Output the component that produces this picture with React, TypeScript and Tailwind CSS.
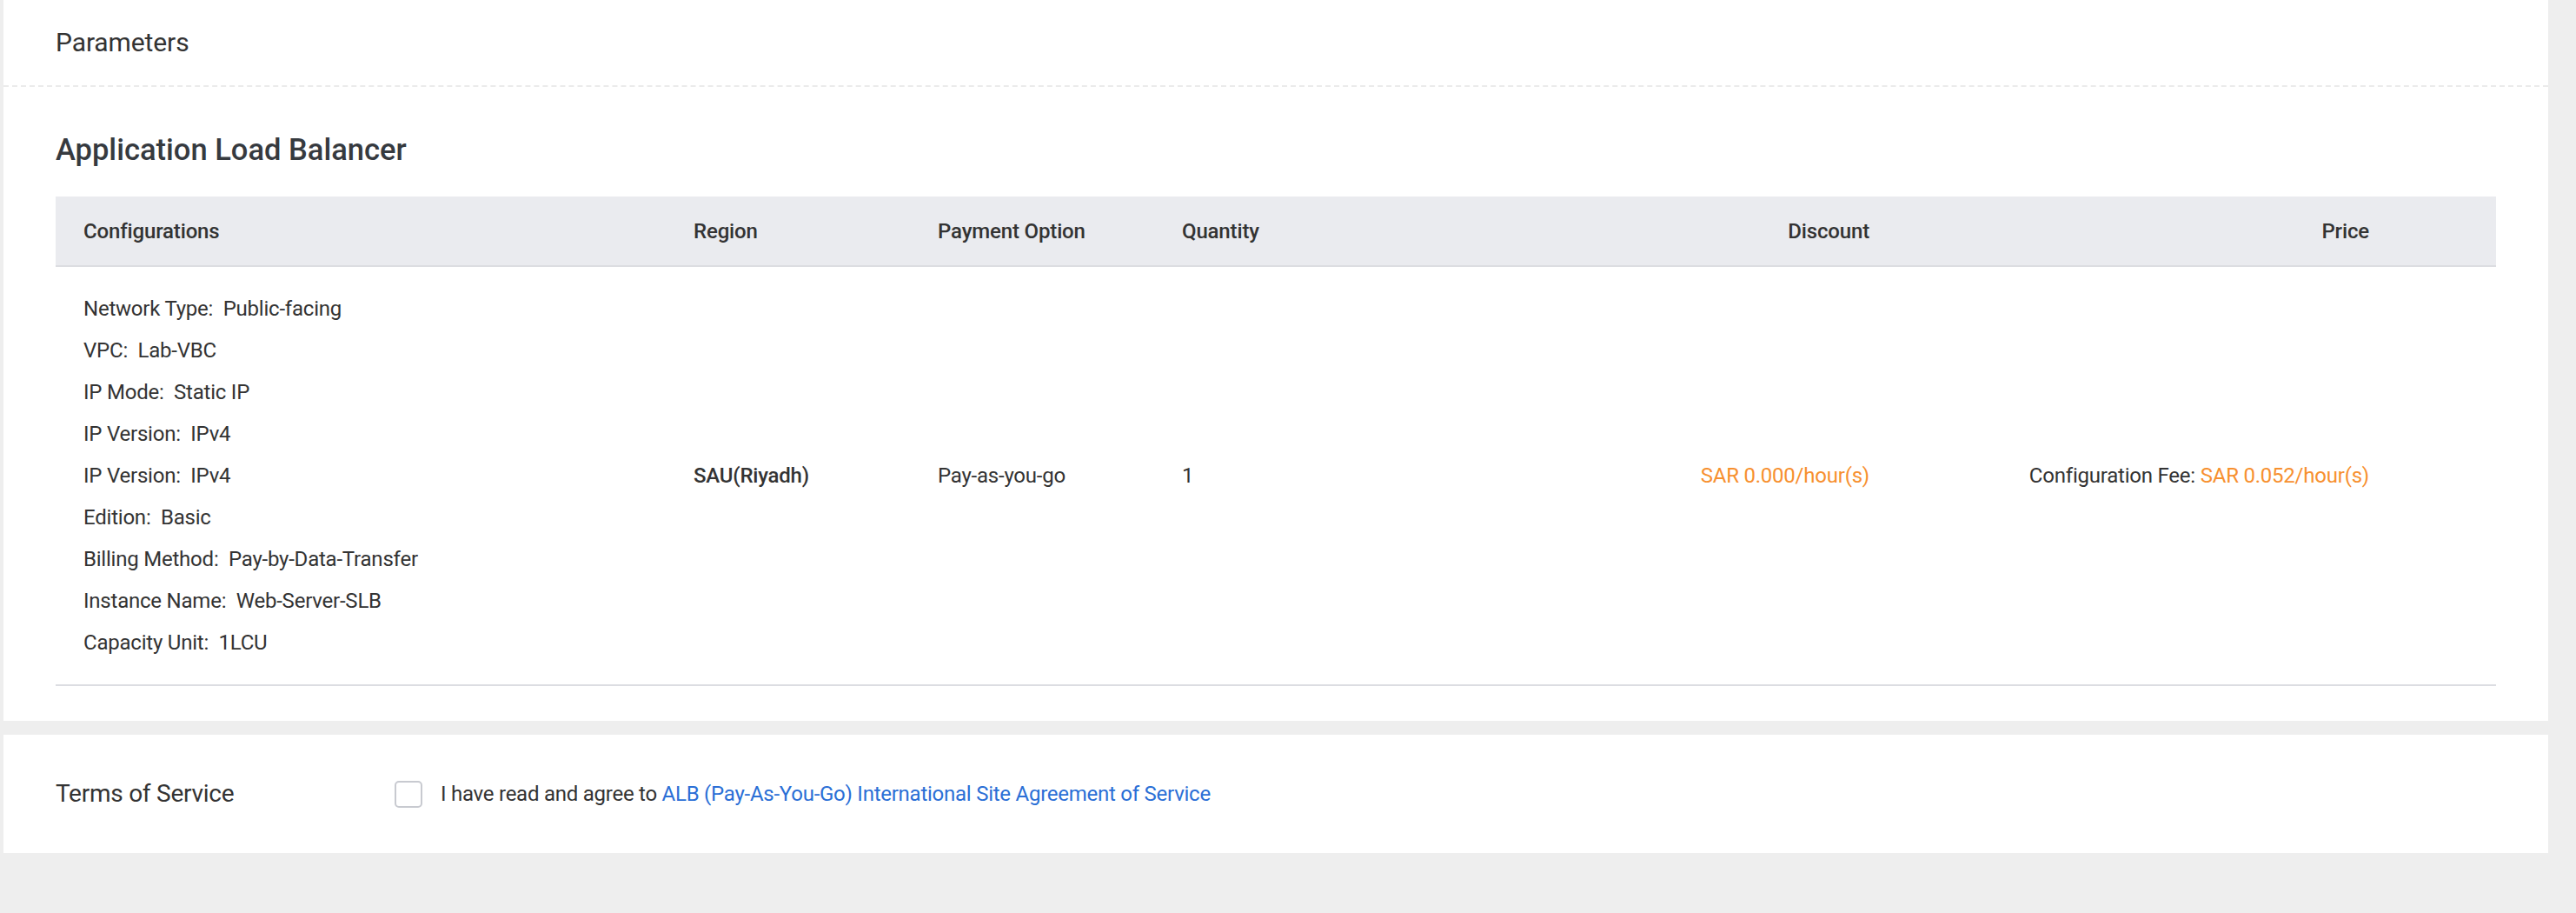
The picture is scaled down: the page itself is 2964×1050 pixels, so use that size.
import React from "react";

const configs = [
  ["Network Type", "Public-facing"],
  ["VPC", "Lab-VBC"],
  ["IP Mode", "Static IP"],
  ["IP Version", "IPv4"],
  ["IP Version", "IPv4"],
  ["Edition", "Basic"],
  ["Billing Method", "Pay-by-Data-Transfer"],
  ["Instance Name", "Web-Server-SLB"],
  ["Capacity Unit", "1LCU"],
];

const cols = "grid grid-cols-[702px_281px_281px_400px_455px_575px_1fr]";

export default function App() {
  return (
    <div
      className="w-[2964px] h-[1050px] bg-[#eeeeee] pl-[4px] pr-[32px] text-[#333333]"
      style={{ fontFamily: "Roboto, 'Noto Sans', sans-serif" }}
    >
      <div className="bg-white">
        <div className="h-[100px] px-[60px] flex items-center border-b-2 border-dashed border-[#ebebeb]">
          <span className="text-[30px] leading-[40px] tracking-[-0.1px]">Parameters</span>
        </div>

        <div className="px-[60px] pb-[40px]">
          <div className="mt-[52px] mb-[34px] h-[40px] text-[34.5px] leading-[40px] font-medium text-[#363a3f]">
            Application Load Balancer
          </div>

          <div className={`${cols} h-[81px] items-center bg-[#eaebef] border-b-2 border-[#dcdde1] text-[24px] font-medium tracking-[-0.15px]`}>
            <div className="pl-[32px]">Configurations</div>
            <div className="pl-[32px]">Region</div>
            <div className="pl-[32px]">Payment Option</div>
            <div className="pl-[32px]">Quantity</div>
            <div className="pr-[32px] text-right">Discount</div>
            <div className="pr-[32px] text-right">Price</div>
            <div />
          </div>

          <div className={`${cols} items-center py-[24px] border-b-2 border-[#dcdde2] text-[24px] tracking-[-0.22px]`}>
            <div className="pl-[32px] flex flex-col">
              {configs.map(([k, v], i) => (
                <div key={i} className="leading-[48px] whitespace-pre">
                  {k}:  {v}
                </div>
              ))}
            </div>
            <div className="pl-[32px] font-medium">SAU(Riyadh)</div>
            <div className="pl-[32px]">Pay-as-you-go</div>
            <div className="pl-[32px]">1</div>
            <div className="pr-[32px] text-right text-[#f7902f]">SAR 0.000/hour(s)</div>
            <div className="pr-[32px] text-right">
              Configuration Fee: <span className="text-[#f7902f]">SAR 0.052/hour(s)</span>
            </div>
            <div />
          </div>
        </div>
      </div>

      <div className="mt-[16px] bg-white h-[136px] px-[60px] flex items-center">
        <div className="w-[390px] text-[28px] tracking-[-0.25px]">Terms of Service</div>
        <div className="flex items-center gap-[21px] text-[24px] tracking-[-0.25px]">
          <div className="w-[32px] h-[31px] rounded-[5px] border-2 border-[#c8cad0] bg-white" />
          <span>
            I have read and agree to{" "}
            <span className="text-[#2b6fd6]">ALB (Pay-As-You-Go) International Site Agreement of Service</span>
          </span>
        </div>
      </div>
    </div>
  );
}
